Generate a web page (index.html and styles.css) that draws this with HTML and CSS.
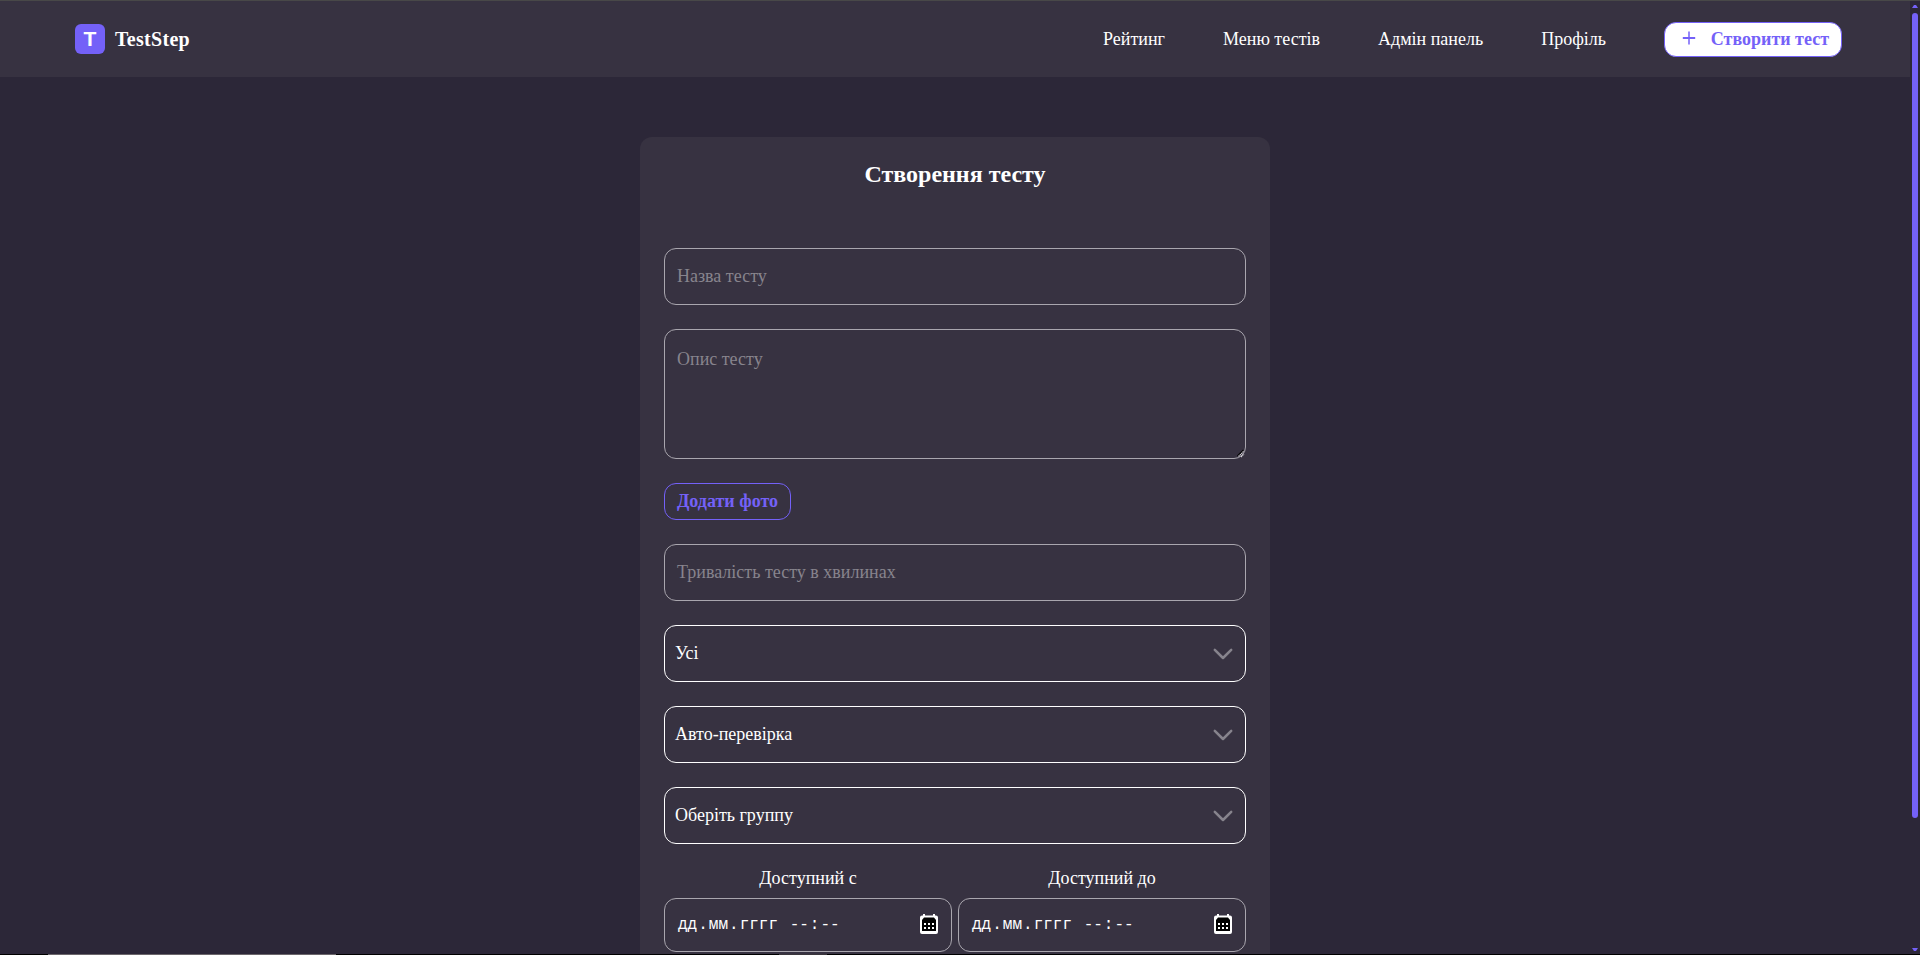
FILE: index.html
```html
<!DOCTYPE html>
<html lang="uk">
<head>
<meta charset="utf-8">
<title>TestStep</title>
<link rel="stylesheet" href="styles.css">
</head>
<body>
<div class="window">
  <div class="page">
    <header class="header">
      <a class="brand">
        <span class="brand-mark">T</span>
        <span class="brand-name">TestStep</span>
      </a>
      <nav class="nav">
        <a>Рейтинг</a>
        <a>Меню тестів</a>
        <a>Адмін панель</a>
        <a>Профіль</a>
        <button class="create">
          <svg width="14" height="14" viewBox="0 0 14 14"><path d="M7 0.5V13.5" stroke="#7461f8" stroke-width="1.5"/><path d="M0.8 7H13.2" stroke="#7461f8" stroke-width="2"/></svg>
          <span>Створити тест</span>
        </button>
      </nav>
    </header>
    <main class="main">
      <form class="card">
        <h1 class="title">Створення тесту</h1>
        <div class="field muted">Назва тесту</div>
        <div class="field area muted">Опис тесту
          <svg class="grip" width="9" height="9" viewBox="0 0 9 9"><path d="M1.5 7L7.5 1" stroke="#000" stroke-width="1.4"/><path d="M2.5 7.5L8 2M5 8L8 5" stroke="#d5d3d8" stroke-width="1.1" stroke-dasharray="1.4 .5"/></svg>
        </div>
        <button class="photo" type="button">Додати фото</button>
        <div class="field muted">Тривалість тесту в хвилинах</div>
        <div class="field select"><span>Усі</span><svg width="20" height="12" viewBox="0 0 20 12"><path d="M1.8 1.8L10 10L18.2 1.8"/></svg></div>
        <div class="field select"><span>Авто-перевірка</span><svg width="20" height="12" viewBox="0 0 20 12"><path d="M1.8 1.8L10 10L18.2 1.8"/></svg></div>
        <div class="field select"><span>Оберіть группу</span><svg width="20" height="12" viewBox="0 0 20 12"><path d="M1.8 1.8L10 10L18.2 1.8"/></svg></div>
        <div class="dates">
          <div class="date-col">
            <label>Доступний с</label>
            <div class="date"><span class="value"><b>дд</b>.<b>мм</b>.<b>гггг</b> <b>--</b>:<b>--</b></span>
              <svg width="18" height="20" viewBox="0 0 18 20"><path d="M2 1.5H16Q18 1.5 18 3.5V18Q18 20 16 20H2Q0 20 0 18V3.5Q0 1.5 2 1.5ZM3 0H5V3H3ZM13 0H15V3H13Z" fill="#fff"/><path d="M2 6L4 3.5H14L16 6V17H2Z" fill="#000"/><path d="M4 9h2v2H4zM8 9h2v2H8zM12 9h2v2h-2zM4 13h2v2H4zM8 13h2v2H8zM12 13h2v2h-2z" fill="#fff"/></svg>
            </div>
          </div>
          <div class="date-col">
            <label>Доступний до</label>
            <div class="date"><span class="value"><b>дд</b>.<b>мм</b>.<b>гггг</b> <b>--</b>:<b>--</b></span>
              <svg width="18" height="20" viewBox="0 0 18 20"><path d="M2 1.5H16Q18 1.5 18 3.5V18Q18 20 16 20H2Q0 20 0 18V3.5Q0 1.5 2 1.5ZM3 0H5V3H3ZM13 0H15V3H13Z" fill="#fff"/><path d="M2 6L4 3.5H14L16 6V17H2Z" fill="#000"/><path d="M4 9h2v2H4zM8 9h2v2H8zM12 9h2v2h-2zM4 13h2v2H4zM8 13h2v2H8zM12 13h2v2h-2z" fill="#fff"/></svg>
            </div>
          </div>
        </div>
      </form>
    </main>
  </div>
  <div class="scrollbar">
    <svg width="6" height="3" viewBox="0 0 6 3"><path d="M0 3L2 0H4L6 3Z" fill="#7461f8"/></svg>
    <div class="thumb"></div>
    <svg class="down" width="6" height="3" viewBox="0 0 6 3"><path d="M0 0H6L4 3H2Z" fill="#7461f8"/></svg>
  </div>
</div>
<div class="edge"><i></i><i class="short"></i></div>
</body>
</html>
```
FILE: styles.css
```css
* { box-sizing: border-box; }
body {
  margin: 0;
  height: 955px;
  overflow: hidden;
  border-top: 1px solid #484848;
  background: #2c2738;
  color: #fff;
  font-family: "Liberation Serif", "Times New Roman", serif;
  font-size: 18px;
  line-height: 21px;
}
.window { display: flex; height: 953px; }
.page { width: 1910px; height: 953px; overflow: hidden; }
.header {
  display: flex;
  align-items: center;
  justify-content: space-between;
  height: 76px;
  padding: 0 68px 0 75px;
  background: #373241;
}
.brand { display: flex; align-items: center; gap: 10px; }
.brand-mark {
  display: flex;
  align-items: center;
  justify-content: center;
  width: 30px;
  height: 30px;
  border-radius: 6px;
  background: #7461f8;
  font: bold 21px/30px "Liberation Sans", Arial, sans-serif;
}
.brand-name { padding-top: 1px; font-weight: bold; font-size: 20px; letter-spacing: .3px; }
.nav { display: flex; align-items: center; gap: 58px; }
.nav a { padding-top: 1px; }
.create {
  display: flex;
  align-items: center;
  justify-content: flex-end;
  gap: 15px;
  width: 178px;
  height: 35px;
  padding: 0 12px;
  border: 1px solid #7461f8;
  border-radius: 12px;
  background: #fff;
  color: #7461f8;
  font: bold 18px "Liberation Serif", serif;
}
.create svg { margin-bottom: 2px; }
.main { display: flex; justify-content: center; padding-top: 60px; }
.card {
  display: flex;
  flex-direction: column;
  align-items: stretch;
  gap: 24px;
  width: 630px;
  height: 1100px;
  padding: 24px;
  border-radius: 12px;
  background: #373241;
}
.title { margin: 0 0 36px; height: 27px; font-size: 24px; line-height: 27px; text-align: center; }
.field {
  display: flex;
  align-items: center;
  flex: none;
  height: 57px;
  padding: 0 12px;
  border: 1px solid #a9a6ae;
  border-radius: 12px;
}
.muted { color: #87848d; }
.area { position: relative; height: 130px; align-items: flex-start; padding-top: 19px; }
.grip { position: absolute; right: 0; bottom: 0; }
.photo {
  align-self: flex-start;
  flex: none;
  width: 127px;
  height: 37px;
  padding: 0;
  border: 1px solid #7461f8;
  border-radius: 12px;
  background: none;
  color: #7461f8;
  font: bold 18px "Liberation Serif", serif;
}
.select { justify-content: space-between; padding: 0 12px 0 10px; border-color: #fff; }
.select path { fill: none; stroke: #87848d; stroke-width: 2.5; stroke-linecap: round; stroke-linejoin: round; }
.dates { display: flex; gap: 6px; }
.date-col { display: flex; flex-direction: column; gap: 9px; width: 288px; text-align: center; }
.date {
  display: flex;
  align-items: center;
  justify-content: space-between;
  height: 54px;
  padding: 0 13px 0 12px;
  border: 1px solid #a9a6ae;
  border-radius: 12px;
  font-family: "Liberation Mono", "Courier New", monospace;
  font-size: 16px;
}
.date b { padding: 0 1px; font-weight: normal; }
.date svg { margin-bottom: 2px; }
.scrollbar { display: flex; flex-direction: column; align-items: center; width: 10px; padding: 4px 0 3px; }
.thumb { width: 6px; height: 805px; margin-top: 5px; border-radius: 3px; background: #7461f8; }
.down { margin-top: auto; }
.edge { display: flex; gap: 443px; height: 1px; padding-left: 48px; background: #000; }
.edge i { width: 288px; height: 1px; background: #6b666b; }
.edge .short { width: 48px; background: #3a363c; }
```
